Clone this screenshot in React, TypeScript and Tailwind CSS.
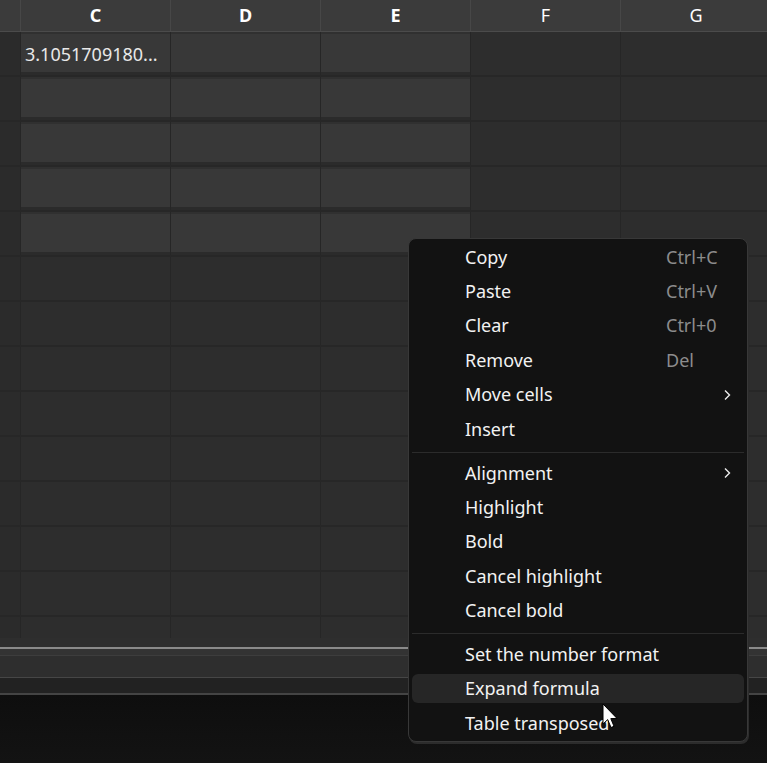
import { ReactNode } from "react";

const font = { fontFamily: '"Noto Sans", "Open Sans", sans-serif' };

const cols = ["C", "D", "E", "F", "G"];
const rows = Array.from({ length: 14 }, (_, i) => i);

type MenuItem = { label: string; shortcut?: string; sub?: boolean; hover?: boolean };

const groups: MenuItem[][] = [
    [
        { label: "Copy", shortcut: "Ctrl+C" },
        { label: "Paste", shortcut: "Ctrl+V" },
        { label: "Clear", shortcut: "Ctrl+0" },
        { label: "Remove", shortcut: "Del" },
        { label: "Move cells", sub: true },
        { label: "Insert" },
    ],
    [
        { label: "Alignment", sub: true },
        { label: "Highlight" },
        { label: "Bold" },
        { label: "Cancel highlight" },
        { label: "Cancel bold" },
    ],
    [
        { label: "Set the number format" },
        { label: "Expand formula", hover: true },
        { label: "Table transposed" },
    ],
];

const Chevron = () => (
    <svg width="10" height="14" viewBox="0 0 10 14" className="absolute right-[12px] top-1/2 -translate-y-1/2">
        <polyline points="3,2.5 7.5,7 3,11.5" fill="none" stroke="#ececec" strokeWidth="1.4" />
    </svg>
);

const Cell = ({ filled, children, last }: { filled: boolean; children?: ReactNode; last?: boolean }) => (
    <div className={`w-[150px] shrink-0 h-full ${last ? "" : "border-r border-[#262626]"} ${filled ? "bg-[#2e2e2e]" : "bg-[#2d2d2d]"}`}>
        {filled && (
            <div className="h-full border-t-2 border-b-[3px] border-t-[#303030] border-b-[#2b2b2b] bg-[#383838] flex items-center pl-[4px] pt-[2px] text-[18px] text-[#e8e8e8]">
                {children}
            </div>
        )}
    </div>
);

export default function App() {
    return (
        <div className="relative w-[767px] h-[763px] overflow-hidden bg-[#101010] flex flex-col" style={font}>
            {/* column header */}
            <div className="flex h-[32px] shrink-0 bg-[#3b3b3b] border-b border-[#4b4b4b]">
                <div className="w-[21px] shrink-0 border-r border-[#474747]" />
                {cols.map((c, i) => (
                    <div
                        key={c}
                        className={`w-[150px] shrink-0 flex items-center justify-center text-[18px] text-white ${i < 3 ? "font-bold" : "font-normal text-[#f0f0f0]"} ${i < 4 ? "border-r border-[#474747]" : ""}`}
                    >
                        {c}
                    </div>
                ))}
            </div>

            {/* grid */}
            <div className="h-[606px] shrink-0 overflow-hidden bg-[#2e2e2e]">
                {rows.map((r) => (
                    <div key={r} className="flex h-[45px] border-b-2 border-[#272727]">
                        <div className="w-[21px] shrink-0 bg-[#2b2b2b] border-r border-[#262626]" />
                        {cols.map((c, i) => (
                            <Cell key={c} filled={r < 5 && i < 3} last={i === 4}>
                                {r === 0 && i === 0 ? "3.1051709180..." : null}
                            </Cell>
                        ))}
                    </div>
                ))}
            </div>

            {/* scroll area / footer */}
            <div className="h-[9px] shrink-0 bg-[#2e2e2e]" />
            <div className="h-[2px] shrink-0 bg-[#8a8a8a]" />
            <div className="h-[6px] shrink-0 bg-[#333333]" />
            <div className="h-px shrink-0 bg-[#3d3d3d]" />
            <div className="h-[21px] shrink-0 bg-[#2e2e2e]" />
            <div className="h-px shrink-0 bg-[#464646]" />
            <div className="h-[15px] shrink-0 bg-[#222222]" />
            <div className="h-[2px] shrink-0 bg-[#444444]" />
            <div className="flex-1 bg-gradient-to-b from-[#0e0e0e] to-[#131313]" />

            {/* context menu */}
            <div className="absolute left-[408px] top-[238px] w-[340px] h-[504px] rounded-lg bg-[#121212] border border-[#383838] shadow-[1px_2px_0_#2c2c2c] px-[3px] pt-[1px]">
                {groups.map((g, gi) => (
                    <div key={gi}>
                        {gi > 0 && (
                            <div className="pt-[5.5px] pb-[3px]">
                                <div className="h-px bg-[#2b2b2b]" />
                            </div>
                        )}
                        {g.map((it) => (
                            <div key={it.label} className="h-[34.4px] flex items-center">
                                <div
                                    className={`relative w-full h-[29px] rounded-md flex items-center pl-[53px] text-[18px] text-[#f2f2f2] ${it.hover ? "bg-[#262626]" : ""}`}
                                >
                                    <span>{it.label}</span>
                                    {it.shortcut && (
                                        <span className="absolute left-[254px] text-[#8c8c8c]">{it.shortcut}</span>
                                    )}
                                    {it.sub && <Chevron />}
                                </div>
                            </div>
                        ))}
                    </div>
                ))}
            </div>

            {/* mouse pointer */}
            <svg width="18" height="27" viewBox="0 0 18 27" className="absolute left-[602px] top-[703px]">
                <path d="M1 1 L1 21 L5.7 16.6 L9 24.5 L12 23.3 L8.8 15.6 L15 15.4 Z" fill="#ffffff" stroke="#000000" strokeWidth="1" strokeLinejoin="round" />
            </svg>
        </div>
    );
}
